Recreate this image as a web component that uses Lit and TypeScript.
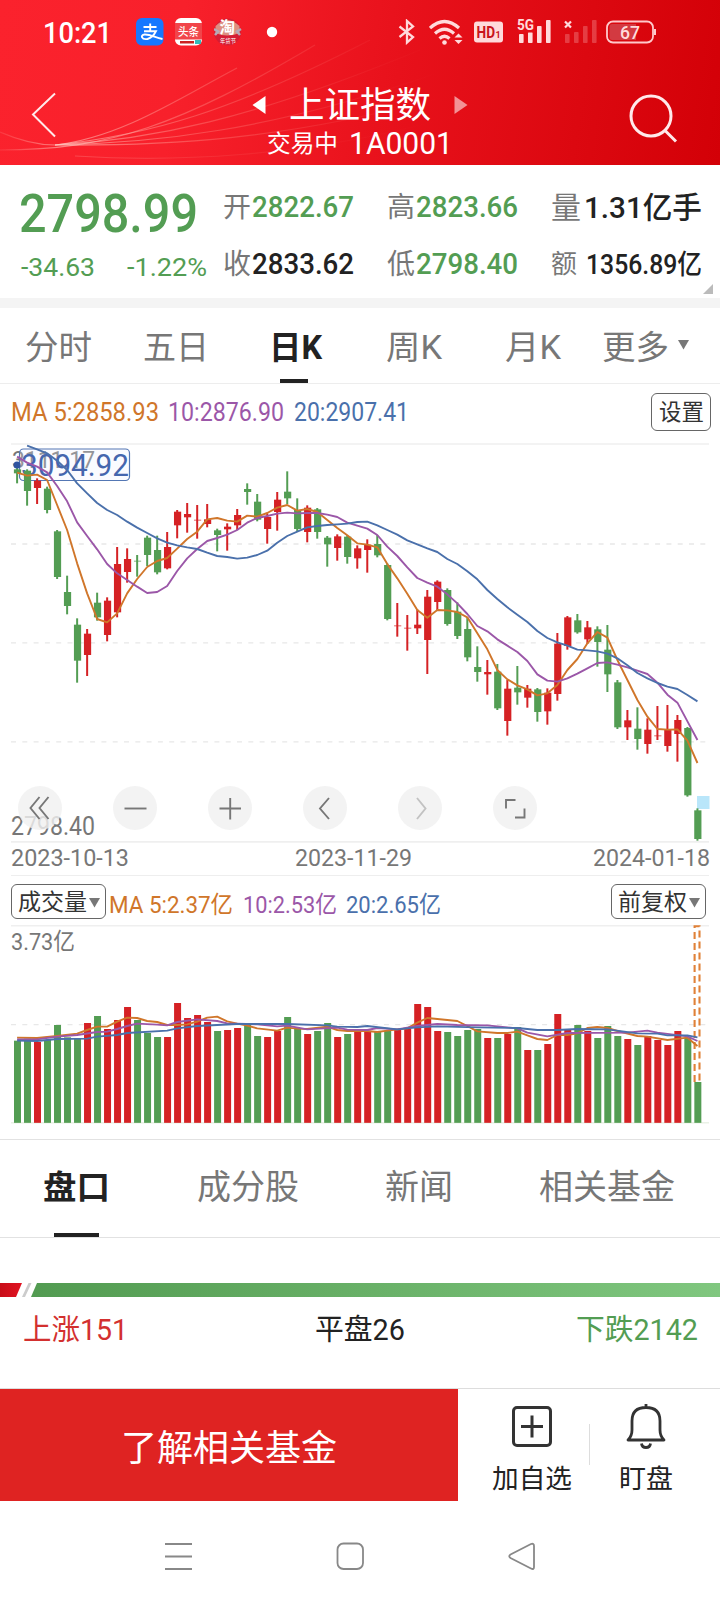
import { LitElement, html, svg, css } from "lit";
import { customElement } from "lit/decorators.js";

/** One line of text set to an exact advance width. */
const t = (text: string, width: number, size: number, cls = "") => html`<svg
  class="t ${cls}" width=${width} height=${size} font-size=${size}>
  <text x="0" y=${size * 0.86} textLength=${width} lengthAdjust="spacingAndGlyphs">${text}</text>
</svg>`;

const RED = "#d52124";
const GREEN = "#539d53";
const ORANGE = "#d0762a";
const PURPLE = "#9b57a8";
const BLUE = "#4a70ab";

const cx = (i: number) => 17.1 + i * 10.005;
const py = (v: number) => 430 + v / 3;
const vy = (v: number) => 920 + v / 3;

// high, low, body top, body bottom (third-pixels below the plot origin), 1 = rising
const candles: number[][] = [
  [100,160,118,130,0],[118,227,122,183,0],[145,222,152,174,1],[170,250,176,240,0],[300,447,304,441,0],
  [437,553,486,528,0],[565,758,584,692,0],[597,738,611,675,1],[488,572,518,562,0],[502,634,512,615,1],
  [351,562,402,547,1],[355,458,387,426,1],[375,440,392,394,0],[317,408,323,375,0],[317,433,360,427,0],
  [306,418,351,415,1],[240,325,245,286,1],[219,308,252,262,1],[225,326,269,271,1],[222,292,268,282,1],
  [296,364,301,315,0],[280,362,290,298,1],[237,300,255,286,1],[160,224,177,186,0],[192,274,215,269,0],
  [250,341,261,297,1],[186,302,209,246,1],[124,222,185,205,0],[205,304,240,297,0],[226,337,233,306,1],
  [234,326,238,306,0],[318,410,323,343,0],[313,392,319,354,1],[315,401,320,381,0],[346,416,355,385,1],
  [328,428,344,360,1],[315,382,342,376,0],[400,571,405,567,0],[519,620,586,588,1],[555,662,593,595,1],
  [538,612,584,595,1],[480,732,500,630,1],[451,540,455,516,1],[475,587,480,582,0],[517,627,545,618,0],
  [562,694,597,682,0],[649,755,711,726,0],[690,794,726,733,1],[702,840,725,835,0],[750,917,776,873,1],
  [708,824,773,787,0],[765,833,776,803,1],[774,875,778,846,0],[775,884,788,844,1],[609,812,641,792,1],
  [558,659,562,648,1],[552,611,571,607,0],[573,642,592,628,1],[589,710,598,636,0],[585,786,659,733,0],
  [750,897,757,892,0],[840,930,871,892,1],[832,959,896,927,0],[865,971,899,942,1],[828,930,916,918,1],
  [825,965,900,948,1],[855,995,870,912,1],[891,1100,894,1096,0],[1135,1232,1141,1227,0],
];

const ma5 = [128,137,134,150,225,300,400,490,567,577,550,490,447,411,393,384,356,327,305,268,264,272,275,257,260,249,233,225,242,237,246,270,294,316,340,344,352,402,445,491,540,563,540,541,546,562,610,658,720,748,766,778,796,790,765,720,687,640,606,623,690,750,810,860,897,899,898,932,999];
const ma10 = [80,98,110,127,168,214,277,318,358,402,430,450,470,489,486,468,423,385,357,333,324,314,300,278,264,258,251,248,250,249,249,254,261,278,287,296,315,350,378,412,444,458,470,493,520,552,588,604,628,647,666,693,733,752,755,745,731,715,699,697,704,712,722,732,758,794,818,874,930];
const ma20 = [null,47,58,70,92,120,160,190,219,240,255,275,293,309,325,338,346,352,357,368,378,381,386,383,375,362,338,318,305,292,288,285,283,281,276,275,286,300,314,331,343,355,366,387,402,424,448,480,507,532,554,576,603,624,637,647,659,661,664,671,685,706,729,745,759,770,777,795,814];

const volumes = "362g 356g 366r 360g 315g 352g 354g 309r 288g 327r 300r 261r 300g 339g 351g 351r 249r 294r 285r 306r 333g 330r 324r 315g 348g 351r 333r 291g 327g 342r 333g 309g 351r 342g 336r 336r 334g 333g 330r 327r 252r 261r 333r 336g 348g 330g 327g 354r 354g 342r 321g 390r 390g 372r 282r 330r 315g 333r 354g 318g 348g 357r 375g 348r 360r 375r 333r 354g 486g".split(" ");

type Pt = [number, number];
const v5: Pt[] = [[0,353],[2,354],[4,348],[6,341],[7,330],[8,320],[9,320],[10,305],[11,293],[12,294],[13,303],[14,306],[15,315],[16,315],[17,313],[18,305],[19,293],[20,290],[21,304],[22,311],[23,317],[24,325],[26,332],[27,323],[28,326],[29,327],[31,320],[32,330],[33,333],[35,333],[36,336],[37,332],[39,325],[40,308],[41,294],[42,297],[44,303],[45,318],[46,334],[48,339],[49,339],[50,335],[51,346],[52,357],[53,360],[54,345],[55,345],[56,340],[57,324],[58,321],[59,324],[60,333],[62,348],[63,350],[65,360],[67,353],[68,378]];
const v10: Pt[] = [[0,358],[2,358],[4,350],[6,345],[8,336],[9,335],[10,327],[11,318],[12,311],[14,314],[15,316],[16,306],[18,298],[20,303],[21,310],[24,313],[26,319],[27,317],[29,328],[32,323],[33,329],[35,330],[36,324],[38,328],[40,318],[42,312],[44,315],[47,316],[50,325],[51,338],[53,349],[55,339],[61,338],[63,332],[64,338],[67,349],[68,363]];
const v20: Pt[] = [[0,362],[2,363],[4,357],[7,356],[8,350],[10,345],[11,339],[15,332],[16,325],[18,318],[22,312],[27,312],[31,316],[32,320],[34,321],[35,318],[38,328],[40,322],[42,319],[46,322],[50,324],[52,330],[54,330],[56,327],[59,328],[62,340],[64,341],[65,346],[67,346],[68,352]];

const priceLine = (d: (number | null)[], c: string) => svg`<polyline fill="none" stroke=${c} stroke-width="1.9" stroke-linejoin="round"
  points=${d.map((v, i) => (v === null ? "" : `${cx(i)},${py(v)}`)).join(" ")} />`;
const volLine = (d: Pt[], c: string) => svg`<polyline fill="none" stroke=${c} stroke-width="1.9" stroke-linejoin="round"
  points=${d.map(([i, v]) => `${cx(i)},${vy(v)}`).join(" ")} />`;

@customElement("price-chart")
export class PriceChart extends LitElement {
  static styles = css`
    :host { display: block; height: 405px; position: relative; }
    svg { display: block; font-family: Roboto, sans-serif; }
    .tools { position: absolute; left: 18px; top: 346px; display: flex; gap: 51px; }
    .tool { width: 44px; height: 44px; border-radius: 50%; background: rgba(240, 240, 240, 0.82); }
  `;
  render() {
    const icons = [
      svg`<path d="M21.500 11 12.500 22l9 11M30.500 11l-9 11 9 11"/>`,
      svg`<path d="M11.500 22.500h22"/>`,
      svg`<path d="M11.500 22.500h21.500M22.200 12v21.500"/>`,
      svg`<path d="M26 12 17 22.500l9 10.500"/>`,
      svg`<path d="M19 12 27.500 22.500l-8.500 10.500" stroke="#c2c2c2"/>`,
      svg`<path d="M13 22.500v-8.500h9.500M31.500 22.500v9h-9.500"/>`,
    ];
    return html`
      <svg width="720" height="405" viewBox="0 440 720 405">
        <g stroke="#efefef" stroke-width="1.7">
          <path d="M11 444H709M11 841.800H709" />
          <path d="M11 544H706M11 642.800H706M11 741.800H706" stroke="#e8e8e8" stroke-dasharray="5 6.300" stroke-width="1.300" />
        </g>
        <text x="12" y="467.500" font-size="24" fill="#777" textLength="83" lengthAdjust="spacingAndGlyphs">3111.17</text>
        <text x="11" y="835" font-size="25" fill="#777" textLength="84" lengthAdjust="spacingAndGlyphs">2798.40</text>
        <rect x="19.500" y="449" width="110" height="31.500" rx="4" fill="rgba(235,240,255,.25)" stroke="#5477b4" stroke-width="1.200" />
        <text x="21" y="476" font-size="32" fill="#4566ae" textLength="108" lengthAdjust="spacingAndGlyphs">3094.92</text>
        <rect x="697" y="796" width="12.500" height="13" fill="#b9e6fa" />
        ${candles.map(([h, l, a, b, up], i) => {
          const c = up ? RED : GREEN;
          const thin = b - a < 4;
          return svg`<path d=${`M${cx(i)} ${py(h)}V${py(l)}`} stroke=${c} stroke-width="2" />
            <rect x=${cx(i) - 3.2} y=${py(a)} width="7.200" height=${Math.max(1, (b - a) / 3)} fill=${c} opacity=${thin ? 0.7 : 1} />`;
        })}
        ${priceLine(ma5, ORANGE)}${priceLine(ma10, PURPLE)}${priceLine(ma20, BLUE)}
        <circle cx="17" cy="465" r="3.600" fill="#3054a0" />
      </svg>
      <div class="tools">
        ${icons.map((p) => html`<div class="tool"><svg width="44" height="44" fill="none" stroke="#777" stroke-width="1.900">${p}</svg></div>`)}
      </div>`;
  }
}

@customElement("volume-chart")
export class VolumeChart extends LitElement {
  static styles = css`
    :host { display: block; height: 216px; }
    svg { display: block; font-family: Roboto, "Noto Sans CJK SC", sans-serif; }
  `;
  render() {
    return html`<svg width="720" height="216" viewBox="0 923 720 216">
      <g stroke="#efefef" stroke-width="1.600">
        <path d="M11 925.800H709" />
        <path d="M11 1122.800H709" stroke="#eaf1e6" />
        <path d="M11 1024.700H706" stroke="#e8e8e8" stroke-dasharray="5 6.300" stroke-width="1.300" />
      </g>
      <text x="11" y="949.500" font-size="24" fill="#777" textLength="64" lengthAdjust="spacingAndGlyphs">3.73亿</text>
      ${volumes.map((s, i) => {
        const v = parseInt(s);
        return svg`<rect x=${cx(i) - 3.1} y=${vy(v)} width="7" height=${(608.5 - v) / 3} fill=${s.endsWith("r") ? RED : GREEN} />`;
      })}
      <path d="M694.600 1082V926.200H699.500V1082" fill="none" stroke="#e08138" stroke-width="2.100" stroke-dasharray="7 4" />
      ${volLine(v5, ORANGE)}${volLine(v10, PURPLE)}${volLine(v20, BLUE)}
    </svg>`;
  }
}

@customElement("app-root")
export class AppRoot extends LitElement {
  static styles = css`
    :host { display: block; width: 720px; height: 1600px; overflow: hidden; background: #fff; color: #222;
      font-family: Roboto, "Noto Sans CJK SC", sans-serif; }
    svg { display: block; flex: none; }
    .t { overflow: visible; fill: currentColor; }
    .m { font-weight: 500; }
    .b { font-weight: 700; }
    .lab, .gray { color: #777; }
    .green { color: #539d53; }
    .red { color: #d3302f; }
    .orange { color: #d0762a; }
    .purple { color: #9b57a8; }
    .blue { color: #4a70ab; }
    .top { position: relative; height: 165px; color: #fff; background: linear-gradient(98deg, #fb222d 0%, #f8202b 25%, #e8111b 55%, #dc0810 80%, #d30007 100%); }
    .waves { position: absolute; left: 0; top: 0; }
    .status { position: relative; height: 64px; padding-left: 43px; display: grid; align-items: center;
      grid-template-columns: 93px 39px 39px 52px 132px 31px 45px 43px 46px 43px 1fr; }
    .nav { position: relative; display: grid; grid-template-columns: 252px 216px 1fr; height: 101px; }
    .back { margin: 28px 0 0 31px; }
    .titles { display: flex; flex-direction: column; padding-top: 23px; gap: 4px; }
    .title { display: flex; align-items: center; gap: 23px; }
    .sub { display: flex; align-items: center; padding-left: 15px; gap: 11px; }
    .search { margin: 30px 0 0 161px; }
    .quote { height: 133px; display: grid; grid-template-columns: 204px 164px 163px 1fr; position: relative; }
    .main { padding: 21px 0 0 19px; }
    .chg { display: flex; padding: 14px 0 0 2px; gap: 32px; }
    .col { display: grid; grid-template-rows: 57px 57px; align-items: center; padding-top: 13px; }
    .pair { display: flex; align-items: center; gap: 1px; padding-left: 19px; }
    .pair.wide { gap: 9px; padding-left: 20px; }
    .pair.mid { gap: 3px; padding-left: 20px; }
    .fold { position: absolute; right: 7px; bottom: 4px; }
    .band { height: 10px; background: #f4f4f4; }
    .tabs { height: 75px; display: grid; grid-template-columns: 118px 126px 117px 119px 97px 1fr; padding-left: 25px; border-bottom: 1px solid #ededed; }
    .tab { position: relative; display: flex; align-items: center; gap: 9px; box-sizing: border-box; width: max-content; height: 75px; padding-top: 3px; }
    .on::after { content: ""; position: absolute; left: 11px; bottom: 0; width: 28px; height: 4px; background: #222; }
    .more svg:last-child { margin-bottom: 4px; }
    .ma { height: 56px; display: grid; grid-template-columns: 157px 126px 357px 1fr; padding-left: 11px; align-items: center; }
    .btn { display: flex; align-items: center; justify-content: center; border: 1.5px solid #666; border-radius: 6px; box-sizing: border-box; color: #333; background: #fff; }
    .set { width: 60px; height: 38px; }
    .dates { display: grid; grid-template-columns: 284px 298px 1fr; margin: 0 11px; height: 30px; border-bottom: 1.5px solid #eee; }
    .vol { height: 46.5px; display: grid; align-items: center; grid-template-columns: 98px 134px 103px 265px 1fr; padding: 5px 0 0 11px; box-sizing: border-box; }
    .vol .ma-v { margin-top: 5px; }
    .drop { width: 95px; height: 35px; gap: 2px; }
    .drop svg:last-child { margin-top: 2px; }
    .tabs2 { height: 97px; display: grid; grid-template-columns: 154px 188px 154px 1fr; padding-left: 43px; border-top: 1px solid #e2e2e2; border-bottom: 1px solid #e2e2e2; }
    .tabs2 .tab { height: 97px; padding: 0 0 2px; }
    .tabs2 .on::after { width: 45px; }
    .ratio { padding-top: 45px; }
    .counts { display: grid; grid-template-columns: 292px 261px 1fr; padding: 18px 0 0 23px; height: 92px; box-sizing: border-box; border-bottom: 1px solid #ddd; }
    .actions { display: grid; grid-template-columns: 458px 131px 1px 113px; height: 112px; }
    .cta { background: #df2322; color: #fff; display: flex; align-items: center; justify-content: center; padding-top: 6px; box-sizing: border-box; }
    .act { display: flex; flex-direction: column; align-items: center; padding-top: 13px; gap: 15px; }
    .act.add { padding-left: 17px; }
    .act.watch { width: 112px; box-sizing: border-box; }
    .rule { height: 41px; margin-top: 35px; background: #ddd; }
    .sys { height: 99px; display: grid; grid-template-columns: 172px 172px 1fr; padding: 40px 0 0 164px; box-sizing: border-box; }
  `;

  private caret() {
    return html`<svg width="11" height="10"><path d="M0 0H11L5.500 9.500Z" fill="#777" /></svg>`;
  }

  render() {
    const bars = (o: number[]) => [0, 1, 2, 3].map((k) => svg`<rect x=${2 + k * 9} y=${[15, 13, 7, 1][k]} width="4.600" height=${[9, 11, 17, 23][k]} rx=".8" fill="#ffdadb" opacity=${o[k]} />`);
    return html`
      <header class="top">
        <svg class="waves" width="480" height="165" fill="none" stroke-width="1.200">
          <defs><linearGradient id="w" gradientUnits="userSpaceOnUse" x1="0" y1="0" x2="440" y2="0">
            <stop offset="0" stop-color="#ffb0a8" stop-opacity=".15" /><stop offset=".14" stop-color="#ffc8c0" stop-opacity=".6" />
            <stop offset=".45" stop-color="#ff9d94" stop-opacity=".36" /><stop offset=".85" stop-color="#ff8d84" stop-opacity=".06" /><stop offset="1" stop-color="#ff8d84" stop-opacity="0" />
          </linearGradient></defs>
          <g stroke="url(#w)">
            <path d="M0 132Q30 145 55 145C120 138 180 98 237 68" />
            <path d="M0 150C110 150 180 125 315 45" />
            <path d="M55 145C150 135 230 112 370 40" />
            <path d="M55 145C150 140 250 120 420 50" />
            <path d="M55 145C150 143 270 132 440 72" />
            <path d="M55 145C170 146 280 140 440 98" />
            <path d="M75 156C170 162 300 158 440 120" stroke-opacity=".4" />
          </g>
        </svg>
        <div class="status">
          ${t("10:21", 69, 29, "m")}
          <svg width="28" height="28"><rect width="27.500" height="27.500" rx="6" fill="#1677ff" /><g fill="none" stroke="#fff" stroke-width="1.900"><path d="M7.500 9H20.500M14.200 5.500V13.500M8 13.200H20Q17 19.500 11.500 21C5.500 22 4 17 8.500 16.500C14 16 19 19.500 26.500 21" /></g></svg>
          <svg width="28" height="28"><rect width="27" height="27.500" rx="6" fill="#fff" /><rect y="5" width="27" height="16.500" fill="#f1454a" /><text x="3" y="17.500" font-size="11.500" fill="#fff" textLength="21" lengthAdjust="spacingAndGlyphs" font-weight="500">头条</text><rect x="5" y="23" width="14" height="2.500" fill="#c22" /><rect x="20" y="22" width="6" height="4" fill="#3bb" /></svg>
          <svg width="28" height="28"><circle cx="13.500" cy="14" r="13.500" fill="#d51d33" /><path d="M1.500 8Q13 -4 25.500 8V15Q13 20 1.500 15Z" fill="#dd8f80" /><path d="M0 11 4 13.500 1 17M27 11 23 13.500 26 17" stroke="#b5a9b8" stroke-width="2.500" fill="none" /><text x="5.500" y="15" font-size="15.500" fill="#fff" font-weight="700">淘</text><text x="6" y="24.500" font-size="5.500" fill="#fff" textLength="16" lengthAdjust="spacingAndGlyphs">年货节</text></svg>
          <svg width="12" height="12"><circle cx="6" cy="6" r="5.200" fill="#fff" /></svg>
          <svg width="18" height="26" fill="none" stroke="#ffdadb" stroke-width="2.300"><path d="M1.500 7.500 15 18 9 23.500V2L15 7.500 1.500 18" /></svg>
          <svg width="34" height="27" fill="none" stroke="#ffdadb" stroke-width="3.200"><path d="M1 9Q15.500 -4 30 9M6 14.500Q15.500 6 25 14.500M10.500 19.500Q15.500 15 20.500 19.500" /><circle cx="15.500" cy="23.500" r="2.300" fill="#ffdadb" stroke="none" /><path d="M25.500 18.500 29.500 14.500 33.500 18.500ZM25.500 21 29.500 25 33.500 21Z" fill="#ffdadb" stroke="none" /></svg>
          <svg width="30" height="22"><rect y=".5" width="29" height="21" rx="3" fill="#ffdadb" /><text x="2.500" y="17" font-size="17" font-weight="700" fill="#c9141b" textLength="18.500" lengthAdjust="spacingAndGlyphs">HD</text><text x="21.500" y="17" font-size="9" font-weight="700" fill="#c9141b">1</text></svg>
          <svg class="t" width="36" height="26">${bars([1, 1, 1, 1])}<rect x="1" y="0" width="17" height="13.500" fill="#e40e17" /><text x="0" y="11" font-size="14" font-weight="700" fill="#ffdadb" textLength="17" lengthAdjust="spacingAndGlyphs">5G</text></svg>
          <svg width="36" height="26">${bars([0.25, 0.25, 0.25, 0.25])}<path d="M2 2.500 8 8.500M8 2.500 2 8.500" stroke="#ffdadb" stroke-width="2.200" /></svg>
          <svg width="50" height="24"><rect x="1" y="1.500" width="46" height="21" rx="6" fill="none" stroke="#ffc9cb" stroke-width="1.800" /><path d="M6 4H30V20H6Q3.500 20 3.500 17V7Q3.500 4 6 4Z" fill="#d33a41" /><path d="M49 9V15" stroke="#ffc9cb" stroke-width="2" /><text x="14" y="18.500" font-size="18" font-weight="500" fill="#ffdadb" textLength="20" lengthAdjust="spacingAndGlyphs">67</text></svg>
        </div>
        <div class="nav">
          <svg class="back" width="26" height="46" fill="none" stroke="#ffe9ea" stroke-width="2"><path d="M24 1.500 2 22.500 24 44.500" /></svg>
          <div class="titles">
            <div class="title">
              <svg width="14" height="20"><path d="M13.500 1V19L.5 10Z" fill="#fff" /></svg>
              ${t("上证指数", 142, 36)}
              <svg width="14" height="20"><path d="M.5 1V19L13.500 10Z" fill="#fff" opacity=".55" /></svg>
            </div>
            <div class="sub">${t("交易中", 71, 24)}${t("1A0001", 104, 31)}</div>
          </div>
          <svg class="search" width="50" height="50" fill="none" stroke="#ffe9ea" stroke-width="3"><circle cx="22" cy="22" r="20" /><path d="M36 36.500 47 47.500" /></svg>
        </div>
      </header>

      <section class="quote">
        <div class="main green">
          ${t("2798.99", 179, 53, "m")}
          <div class="chg">${t("-34.63", 74, 26.5)}${t("-1.22%", 80, 26.5)}</div>
        </div>
        <div class="col">
          <div class="pair">${t("开", 28, 28, "lab")}${t("2822.67", 102, 29, "m green")}</div>
          <div class="pair">${t("收", 28, 28, "lab")}${t("2833.62", 102, 29, "m")}</div>
        </div>
        <div class="col">
          <div class="pair">${t("高", 28, 28, "lab")}${t("2823.66", 102, 29, "m green")}</div>
          <div class="pair">${t("低", 28, 28, "lab")}${t("2798.40", 102, 29, "m green")}</div>
        </div>
        <div class="col">
          <div class="pair mid">${t("量", 30, 30, "lab")}${t("1.31亿手", 118, 30, "m")}</div>
          <div class="pair wide">${t("额", 26, 26, "lab")}${t("1356.89亿", 116, 27.5, "m")}</div>
        </div>
        <svg class="fold" width="10" height="10"><path d="M10 0V10H0Z" fill="#bbb" /></svg>
      </section>
      <div class="band"></div>

      <nav class="tabs">
        <div class="tab gray">${t("分时", 67, 33)}</div>
        <div class="tab gray">${t("五日", 66, 33)}</div>
        <div class="tab on">${t("日K", 53, 33, "b")}</div>
        <div class="tab gray">${t("周K", 56, 33)}</div>
        <div class="tab gray">${t("月K", 56, 33)}</div>
        <div class="tab more gray">${t("更多", 67, 33)}${this.caret()}</div>
      </nav>

      <div class="ma">
        ${t("MA 5:2858.93", 148, 25.5, "orange")}
        ${t("10:2876.90", 116, 25.5, "purple")}
        ${t("20:2907.41", 115, 25.5, "blue")}
        <div class="btn set">${t("设置", 45, 22.5)}</div>
      </div>
      <price-chart></price-chart>
      <div class="dates gray">
        ${t("2023-10-13", 118, 24)}${t("2023-11-29", 117, 24)}${t("2024-01-18", 117, 24)}
      </div>
      <div class="vol">
        <div class="btn drop">${t("成交量", 69, 23)}${this.caret()}</div>
        ${t("MA 5:2.37亿", 124, 24, "orange ma-v")}
        ${t("10:2.53亿", 94, 24, "purple ma-v")}
        ${t("20:2.65亿", 95, 24, "blue ma-v")}
        <div class="btn drop">${t("前复权", 69, 23)}${this.caret()}</div>
      </div>
      <volume-chart></volume-chart>

      <nav class="tabs2">
        <div class="tab on">${t("盘口", 67, 33.5, "b")}</div>
        <div class="tab gray">${t("成分股", 102, 34)}</div>
        <div class="tab gray">${t("新闻", 68, 34)}</div>
        <div class="tab gray">${t("相关基金", 136, 34)}</div>
      </nav>

      <section class="ratio">
        <svg width="720" height="14">
          <defs>
            <linearGradient id="r"><stop stop-color="#c80d18" /><stop offset="1" stop-color="#e11322" /></linearGradient>
            <linearGradient id="g"><stop stop-color="#529b51" /><stop offset="1" stop-color="#80c77f" /></linearGradient>
          </defs>
          <path d="M0 0H22L16 14H0Z" fill="url(#r)" /><path d="M28.500 0H31.500L25 14H22Z" fill="#ccc" /><path d="M37 0H720V14H31Z" fill="url(#g)" />
        </svg>
        <div class="counts">
          ${t("上涨151", 105, 29, "red")}${t("平盘26", 90, 29)}${t("下跌2142", 122, 29, "green")}
        </div>
      </section>

      <footer class="actions">
        <div class="cta">${t("了解相关基金", 216, 36)}</div>
        <div class="act add">
          <svg width="48" height="48" fill="none" stroke="#333" stroke-width="3"><rect x="5.500" y="5.500" width="37" height="38" rx="3.500" /><path d="M13 24.500H35M24 13.500V35.500" /></svg>
          ${t("加自选", 80, 26.5)}
        </div>
        <div class="rule"></div>
        <div class="act watch">
          <svg width="48" height="48" viewBox="-2 0 48 48" fill="none" stroke="#333" stroke-width="2.800" stroke-linejoin="round"><path d="M4 38Q8 34 8 28V19Q8 5.500 22 5.500T36 19V28Q36 34 40 38ZM22 2V6M17.500 41.500Q18 45.500 22 45.500T26.500 41.500" /></svg>
          ${t("盯盘", 54, 26.5)}
        </div>
      </footer>
      <div class="sys">
        <svg width="30" height="32" stroke="#888" stroke-width="2"><path d="M1 3H28M1 15.500H28M1 28H28" /></svg>
        <svg width="30" height="32" fill="none" stroke="#888" stroke-width="1.800"><rect x="1.500" y="2.500" width="25.500" height="25.500" rx="6" /></svg>
        <svg width="30" height="32" fill="none" stroke="#888" stroke-width="1.800" stroke-linejoin="round"><path d="M2.500 13.500 23 3Q26 2 26 5V26Q26 29 23 27.500L2.500 17Q0 15.200 2.500 13.500Z" /></svg>
      </div>
    `;
  }
}
